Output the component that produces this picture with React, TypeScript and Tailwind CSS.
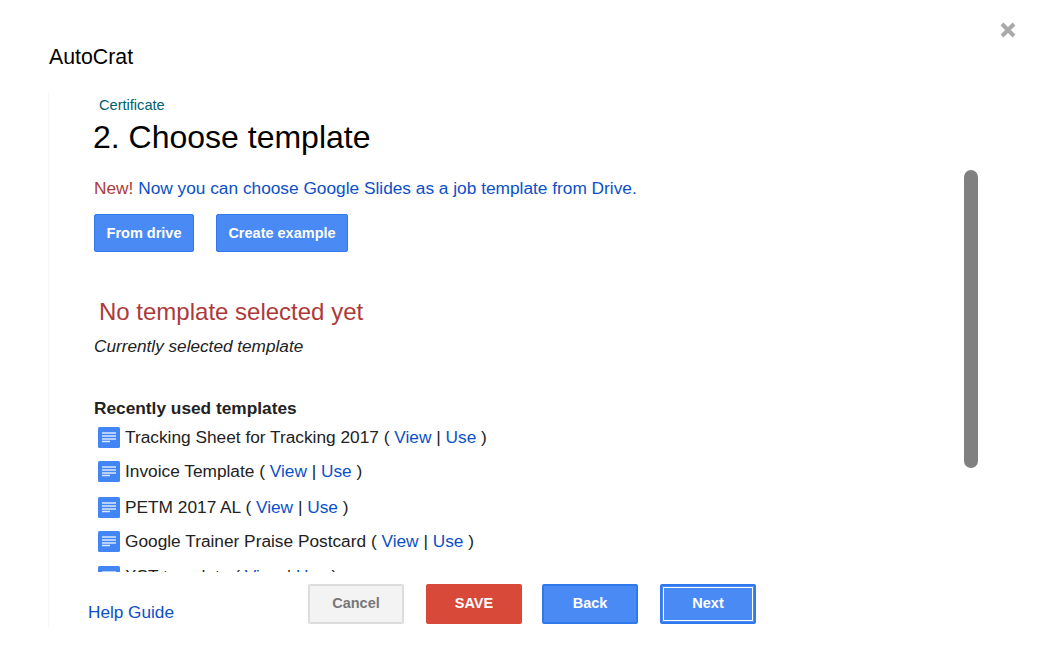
const templates = [
  { name: 'Tracking Sheet for Tracking 2017', mt: 'mt-[8px]' },
  { name: 'Invoice Template', mt: 'mt-[12px]' },
  { name: 'PETM 2017 AL', mt: 'mt-[14px]' },
  { name: 'Google Trainer Praise Postcard', mt: 'mt-[12px]' },
  { name: 'XST template', mt: 'mt-[13px]' },
]

function DocIcon() {
  return (
    <svg width="22" height="21" viewBox="0 0 22 21" className="shrink-0">
      <rect width="22" height="21" rx="1.5" fill="#4285f4" />
      <path d="M4 6h14M4 9h14M4 12h14M4 14.5h8" stroke="#dbe7fd" strokeWidth="1.4" />
    </svg>
  )
}

function ActionButton({ label, className }: { label: string; className: string }) {
  return (
    <button className={`h-10 w-24 rounded-[2px] pb-[1px] text-[14.5px] font-bold ${className}`}>{label}</button>
  )
}

export default function App() {
  return (
    <div className="relative h-[664px] w-[1038px] overflow-hidden bg-white pl-[48px] text-[#222] [font-family:'Liberation_Sans',Arial,sans-serif]">
      <svg width="18" height="18" viewBox="0 0 18 18" className="absolute left-[999px] top-[21px]">
        <path d="M3 3l12 12M15 3L3 15" stroke="#a9a9a9" strokeWidth="4" />
      </svg>

      <div className="h-[93px] pl-[1px] pt-[44px] text-[21.3px] leading-[26px] text-black">AutoCrat</div>

      <div className="relative h-[535px] border-l border-[#f6f6f6] pl-[45px]">
        <div className="h-[479px] overflow-hidden">
          <div className="pl-[5px] pt-[4px] text-[14.6px] leading-[17px] text-[#00606f]">Certificate</div>
          <h1 className="ml-[-1px] mt-[5px] text-[32px] leading-[37px] text-black">2. Choose template</h1>
          <p className="mt-[22px] text-[17.3px] leading-[20px] text-[#0b50c8]">
            <span className="text-[#ad3a3a]">New!</span> Now you can choose Google Slides as a job template from Drive.
          </p>
          <div className="mt-[16px] flex gap-[22px]">
            <button className="h-[38px] w-[100px] rounded-[2px] border border-[#3079ed] bg-[#4a8af4] pt-[1px] text-[14.5px] font-bold text-white">From drive</button>
            <button className="h-[38px] w-[132px] rounded-[2px] border border-[#3079ed] bg-[#4a8af4] pt-[1px] text-[14.5px] font-bold text-white">Create example</button>
          </div>
          <div className="mt-[45px] pl-[5px] text-[24px] leading-[30px] text-[#ad3a3a]">No template selected yet</div>
          <div className="mt-[9px] text-[17.2px] italic leading-[20px]">Currently selected template</div>
          <div className="mt-[42px] text-[17.3px] font-bold leading-[20px]">Recently used templates</div>
          {templates.map((t) => (
            <div key={t.name} className={`flex items-center gap-[5px] pl-[4px] text-[17.3px] leading-[22px] ${t.mt}`}>
              <DocIcon />
              <span>
                {t.name} ( <a className="text-[#0b50c8]">View</a> | <a className="text-[#0b50c8]">Use</a> )
              </span>
            </div>
          ))}
        </div>

        <div className="flex">
          <a className="ml-[-6px] mt-[29px] w-[220px] text-[17.2px] leading-[22px] text-[#0b50c8]">Help Guide</a>
          <div className="mt-[12px] flex">
            <ActionButton label="Cancel" className="border-2 border-[#dcdcdc] bg-[#f3f3f3] text-[#777]" />
            <ActionButton label="SAVE" className="ml-[22px] bg-[#d9493a] text-white" />
            <ActionButton label="Back" className="ml-[20px] border-2 border-[#3079ed] bg-[#4a8af4] text-white" />
            <ActionButton label="Next" className="ml-[22px] border-2 border-[#3079ed] bg-[#4a8af4] text-white outline outline-1 -outline-offset-4 outline-white" />
          </div>
        </div>
      </div>

      <div className="absolute left-[964px] top-[170px] h-[298px] w-[14px] rounded-[7px] bg-[#808080]" />
    </div>
  )
}
